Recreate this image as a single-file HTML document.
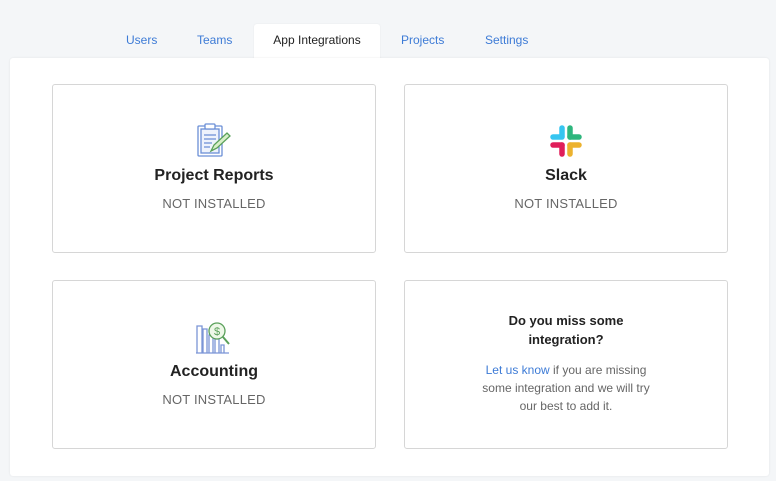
<!DOCTYPE html>
<html><head><meta charset="utf-8"><style>
body{margin:0;width:776px;height:481px;background:#f4f6f8;font-family:"Liberation Sans",sans-serif;position:relative;overflow:hidden}
.tab{position:absolute;top:33px;font-size:12px;color:#3d7bd6}
.active{position:absolute;left:254px;top:24px;width:126px;height:36px;background:#fff;border-radius:3px 3px 0 0;box-shadow:0 0 2px rgba(0,0,0,.06);font-size:12px;color:#222;text-align:center;line-height:32px}
.panel{position:absolute;left:10px;top:58px;width:759px;height:418px;background:#fff;border-radius:3px;box-shadow:0 0 2px rgba(0,0,0,.08)}
.card{position:absolute;width:322px;height:167px;border:1px solid #d6d6d6;border-radius:3px;background:#fff;text-align:center}
.card h3{position:absolute;left:0;right:0;margin:0;font-size:16px;font-weight:bold;color:#222}
.card .s{position:absolute;left:0;right:0;font-size:13px;color:#666;letter-spacing:.2px}
.card svg{position:absolute}
</style></head><body>
<div class="tab" style="left:126px">Users</div>
<div class="tab" style="left:197px">Teams</div>
<div class="active">App Integrations</div>
<div class="tab" style="left:401px">Projects</div>
<div class="tab" style="left:485px">Settings</div>
<div class="panel"></div>

<div class="card" style="left:52px;top:84px">
<svg style="left:142px;top:38px" width="38" height="36" viewBox="0 0 38 36" fill="none" stroke="#6b8fd6" stroke-width="1.3">
<rect x="3" y="3" width="24" height="30" rx="1"/><rect x="6" y="6" width="18" height="24" fill="#eef3fc"/>
<rect x="10" y="1" width="10" height="5" rx="1" fill="#fff"/>
<path d="M9 12h12M9 16h12M9 20h8M9 24h6"/>
<path d="M16 28l3-6 13-12 3 3-13 12z" stroke="#5aa05a" fill="#d8efc8"/>
</svg>
<h3 style="top:82px">Project Reports</h3><div class="s" style="top:111px">NOT INSTALLED</div></div>

<div class="card" style="left:404px;top:84px">
<svg style="left:143px;top:38px" width="36" height="36" viewBox="0 0 36 36" stroke-linecap="round" stroke-width="5.5">
<path d="M14 5v8" stroke="#36c5f0"/><path d="M5 14h9" stroke="#36c5f0"/>
<path d="M22 5v9" stroke="#2eb67d"/><path d="M22 14h9" stroke="#2eb67d"/>
<path d="M5 22h9" stroke="#e01e5a"/><path d="M14 22v9" stroke="#e01e5a"/>
<path d="M22 22h9" stroke="#ecb22e"/><path d="M22 22v9" stroke="#ecb22e"/>
</svg>
<h3 style="top:82px">Slack</h3><div class="s" style="top:111px">NOT INSTALLED</div></div>

<div class="card" style="left:52px;top:280px">
<svg style="left:142px;top:38px" width="40" height="36" viewBox="0 0 40 36" fill="none" stroke="#7b95d6" stroke-width="1.3">
<path d="M2 34V7h5v27M8 34V10h4v24M14 34V16h4v18M20 34V20h4v14M26 34v-8h3v8M1 34h33"/>
<circle cx="22" cy="12" r="8" stroke="#5aa05a" fill="#eef8e8"/>
<text x="22" y="16" font-size="11" fill="#5aa05a" stroke="none" text-anchor="middle" font-family="Liberation Sans">$</text>
<path d="M28 18l6 7" stroke="#5aa05a" stroke-width="2"/>
</svg>
<h3 style="top:82px">Accounting</h3><div class="s" style="top:111px">NOT INSTALLED</div></div>

<div class="card" style="left:404px;top:280px">
<div style="position:absolute;left:0;right:0;top:30px;font-size:13px;font-weight:bold;color:#222;line-height:19px">Do you miss some<br>integration?</div>
<div style="position:absolute;left:0;right:0;top:80px;font-size:12px;color:#666;line-height:18px"><span style="color:#3d7bd6">Let us know</span> if you are missing<br>some integration and we will try<br>our best to add it.</div>
</div>
</body></html>
